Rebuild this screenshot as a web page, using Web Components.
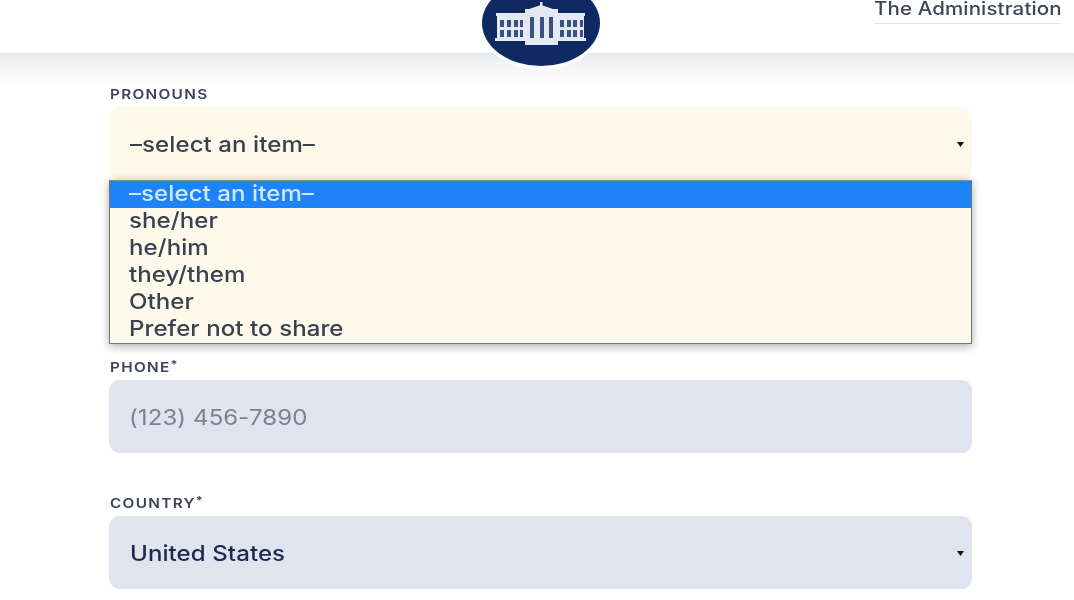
<!DOCTYPE html>
<html lang="en">
<head>
<meta charset="utf-8">
<title>Sign up</title>
<style>
    html, body { margin: 0; height: 100%; overflow: hidden; background: #fff; }
    body { font-family: Inter, "Liberation Sans", sans-serif; color: #1d2a4d; filter: blur(0.6px); }
</style>
</head>
<body>
<site-header>
    <a slot="nav">The Administration</a>
</site-header>
<signup-form>
    <form-field label="Pronouns" tone="cream">
        <select-box value="–select an item–"></select-box>
        <option-menu slot="overlay" options="–select an item–|she/her|he/him|they/them|Other|Prefer not to share"></option-menu>
    </form-field>
    <!-- the field behind the open menu: nothing of it shows -->
    <div style="height:95px"></div>
    <form-field label="Phone" required>
        <text-box placeholder="(123) 456-7890"></text-box>
    </form-field>
    <form-field label="Country" required>
        <select-box value="United States"></select-box>
    </form-field>
</signup-form>

<script>
// the reference face is wider than any installed one, so text is stretched a bit
const wideText = `
    .wide {
        display: inline-block;
        transform: scaleX(var(--wide, 1.12));
        transform-origin: left center;
        white-space: nowrap;
    }
`;

class SiteHeader extends HTMLElement {
    constructor() {
        super();
        this.attachShadow({ mode: 'open' });
        this.shadowRoot.innerHTML = `
            <style>
                ${wideText}
                :host {
                    display: flex;
                    justify-content: flex-end;
                    position: relative;
                    height: 53px;
                    padding-right: 13px;
                    background: #fff;
                    box-sizing: border-box;
                }
                nav {
                    width: 187px;
                    height: 24px;
                    box-sizing: border-box;
                    border-bottom: 1px solid #dde4f1;
                    font-size: 18px;
                    font-weight: 500;
                    line-height: 17px;
                    letter-spacing: 0.1px;
                    color: #3f4757;
                    --wide: 1.14;
                }
                .seal {
                    position: absolute;
                    left: 476px;
                    top: 0;
                    width: 130px;
                    height: 72px;
                }
            </style>
            <svg class="seal" viewBox="476 0 130 72" aria-hidden="true">
                <ellipse cx="541" cy="23" rx="62" ry="47" fill="#fff" opacity="0.85"/>
                <ellipse cx="541" cy="23" rx="59" ry="43" fill="#0f2a63"/>
                <g fill="#e4e8f1">
                    <rect x="496" y="13" width="89" height="3"/>
                    <rect x="497" y="16" width="87" height="22"/>
                    <rect x="495" y="38" width="91" height="3"/>
                    <rect x="525" y="9" width="33" height="36"/>
                    <path d="M529 9 L541 5 L553 9 Z"/>
                    <rect x="540" y="2" width="2.5" height="4"/>
                </g>
                <g fill="#3a4f84">
                    <path d="M500 20h4v7h-4zM507 20h4v7h-4zM514 20h4v7h-4zM520 20h3v7h-3zM500 30h4v7h-4zM507 30h4v7h-4zM514 30h4v7h-4zM520 30h3v7h-3z"/>
                    <path d="M560 20h4v7h-4zM567 20h4v7h-4zM573 20h4v7h-4zM580 20h3v7h-3zM560 30h4v7h-4zM567 30h4v7h-4zM573 30h4v7h-4zM580 30h3v7h-3z"/>
                    <path d="M530 17h4v21h-4zM540 17h4v21h-4zM549 17h4v21h-4z"/>
                </g>
            </svg>
            <nav><span class="wide"><slot name="nav"></slot></span></nav>
        `;
    }
}

class SignupForm extends HTMLElement {
    constructor() {
        super();
        this.attachShadow({ mode: 'open' });
        this.shadowRoot.innerHTML = `
            <style>
                :host {
                    display: block;
                    height: 547px;
                    box-sizing: border-box;
                    padding: 33px 102px 0 109px;
                    background: linear-gradient(#e5e6e9 0, #f2f3f5 10px, #fbfbfc 25px, #fff 38px);
                }
                .stack {
                    display: flex;
                    flex-direction: column;
                    gap: 42px;
                }
            </style>
            <div class="stack"><slot></slot></div>
        `;
    }
}

class FormField extends HTMLElement {
    constructor() {
        super();
        this.attachShadow({ mode: 'open' });
        const required = this.hasAttribute('required') ? '<sup>*</sup>' : '';
        this.shadowRoot.innerHTML = `
            <style>
                ${wideText}
                :host {
                    display: block;
                    position: relative;
                }
                label {
                    display: block;
                    height: 21px;
                    padding-left: 1px;
                    box-sizing: border-box;
                    font-size: 13px;
                    font-weight: 600;
                    line-height: 16px;
                    letter-spacing: 1.1px;
                    text-transform: uppercase;
                    color: #3c4458;
                    --wide: 1.18;
                }
                sup {
                    font-size: 11px;
                    line-height: 0;
                    vertical-align: 4px;
                    margin-left: 0;
                }
            </style>
            <label><span class="wide">${this.getAttribute('label')}${required}</span></label>
            <slot></slot>
            <slot name="overlay"></slot>
        `;
        if (this.getAttribute('tone') === 'cream') {
            this.style.setProperty('--box-bg', '#fefaeb');
            this.style.setProperty('--box-ink', '#3a4150');
        }
    }
}

const boxStyles = `
    ${wideText}
    :host {
        display: flex;
        align-items: center;
        justify-content: space-between;
        height: 73px;
        box-sizing: border-box;
        padding: 0 8px 0 21px;
        border-radius: 11px;
        background: var(--box-bg, #e0e4ef);
        font-size: 21.5px;
        font-weight: 500;
        letter-spacing: 0.05px;
    }
`;

class SelectBox extends HTMLElement {
    constructor() {
        super();
        this.attachShadow({ mode: 'open' });
        this.shadowRoot.innerHTML = `
            <style>
                ${boxStyles}
                :host { color: var(--box-ink, #1d2a4d); }
                svg { width: 7px; height: 5px; margin-top: 2px; }
            </style>
            <span class="wide">${this.getAttribute('value')}</span>
            <svg viewBox="0 0 7 5" aria-hidden="true"><path d="M0 0h7L3.5 5z" fill="#111"/></svg>
        `;
    }
}

class TextBox extends HTMLElement {
    constructor() {
        super();
        this.attachShadow({ mode: 'open' });
        this.shadowRoot.innerHTML = `
            <style>
                ${boxStyles}
                :host { color: #7d8293; font-weight: 400; padding-left: 20px; }
            </style>
            <span class="wide">${this.getAttribute('placeholder')}</span>
        `;
    }
}

class OptionMenu extends HTMLElement {
    constructor() {
        super();
        this.attachShadow({ mode: 'open' });
        const options = this.getAttribute('options').split('|');
        this.shadowRoot.innerHTML = `
            <style>
                ${wideText}
                :host {
                    display: block;
                    position: absolute;
                    left: 0;
                    right: 0;
                    top: 94px;
                    z-index: 2;
                    background: #fefaeb;
                    border: 1px solid #77756c;
                    border-top-color: #8b8b8b;
                    box-sizing: border-box;
                    box-shadow: 0 3px 9px rgba(0, 0, 0, 0.28), 0 -2px 7px rgba(0, 0, 0, 0.08);
                    font-size: 21.5px;
                    font-weight: 500;
                    letter-spacing: 0.05px;
                    color: #3a4150;
                }
                div {
                    height: 27px;
                    line-height: 25px;
                    padding-left: 19px;
                }
                .selected {
                    background: #1e83f7;
                    color: #d3e7ff;
                }
            </style>
            ${options.map((o, i) => `<div class="${i === 0 ? 'selected' : ''}"><span class="wide">${o}</span></div>`).join('')}
        `;
    }
}

customElements.define('site-header', SiteHeader);
customElements.define('signup-form', SignupForm);
customElements.define('form-field', FormField);
customElements.define('select-box', SelectBox);
customElements.define('text-box', TextBox);
customElements.define('option-menu', OptionMenu);
</script>
</body>
</html>
